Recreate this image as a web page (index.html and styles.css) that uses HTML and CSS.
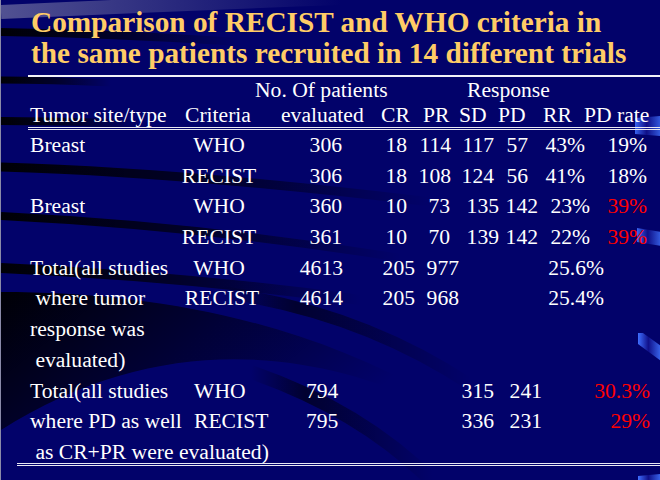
FILE: index.html
```html
<!DOCTYPE html>
<html>
<head>
<meta charset="utf-8">
<link rel="stylesheet" href="styles.css">
</head>
<body>
<div class="slide">
  <svg class="bg" width="660" height="480" viewBox="0 0 660 480" aria-hidden="true">
    <defs>
      <linearGradient id="fadeDark" x1="0" y1="0" x2="1" y2="0">
        <stop offset="0" stop-color="#000" stop-opacity="0.95"/>
        <stop offset="0.5" stop-color="#000" stop-opacity="0.6"/>
        <stop offset="1" stop-color="#000" stop-opacity="0"/>
      </linearGradient>
      <linearGradient id="fadeLight" x1="0" y1="0" x2="1" y2="0">
        <stop offset="0" stop-color="#5a5a96" stop-opacity="0.9"/>
        <stop offset="1" stop-color="#5a5a96" stop-opacity="0"/>
      </linearGradient>
      <linearGradient id="bigDark" x1="0" y1="0" x2="1" y2="0.4">
        <stop offset="0" stop-color="#000" stop-opacity="0.95"/>
        <stop offset="0.6" stop-color="#000" stop-opacity="0.4"/>
        <stop offset="1" stop-color="#000" stop-opacity="0"/>
      </linearGradient>
      <linearGradient id="midDark" x1="0" y1="0" x2="1" y2="0">
        <stop offset="0" stop-color="#000" stop-opacity="0"/>
        <stop offset="0.3" stop-color="#000" stop-opacity="0.55"/>
        <stop offset="1" stop-color="#000" stop-opacity="0"/>
      </linearGradient>
      <linearGradient id="ribbon" x1="0" y1="0" x2="1" y2="0">
        <stop offset="0" stop-color="#3f6fff"/>
        <stop offset="0.45" stop-color="#10108a"/>
        <stop offset="1" stop-color="#3a68f0"/>
      </linearGradient>
    </defs>
    <path d="M0 12 Q170 4 340 -2" stroke="url(#fadeLight)" stroke-width="14" fill="none"/>
    <path d="M0 32 Q120 34 240 42" stroke="url(#fadeDark)" stroke-width="8" fill="none"/>
    <path d="M0 80 Q50 80 110 83" stroke="url(#fadeDark)" stroke-width="7" fill="none"/>
    <path d="M0 121 Q70 121 140 124" stroke="url(#fadeDark)" stroke-width="8" fill="none"/>
    <path d="M0 167 Q180 172 430 202" stroke="url(#fadeDark)" stroke-width="9" fill="none"/>
    <path d="M0 216 Q200 226 400 258" stroke="url(#fadeDark)" stroke-width="8" fill="none"/>
    <path d="M0 268 Q180 276 360 300" stroke="url(#fadeDark)" stroke-width="10" fill="none"/>
    <path d="M0 292 C150 292 300 320 430 395 L430 405 C300 345 150 335 0 430 Z" fill="url(#bigDark)"/>
    <path d="M220 292 Q360 312 470 385" stroke="url(#midDark)" stroke-width="12" fill="none"/>
    <path d="M250 372 Q360 410 432 482" stroke="url(#midDark)" stroke-width="14" fill="none"/>
    <polygon points="634,118 660,116 660,136 634,134" fill="url(#ribbon)" opacity="0.9"/>
    <polygon points="636,228 660,232 660,246 636,242" fill="url(#ribbon)" opacity="0.9"/>
    <polygon points="637,333 642,333 660,346 660,361 637,344" fill="url(#ribbon)"/>
    <polygon points="637,476 660,474 660,480 637,480" fill="url(#ribbon)"/>
  </svg>

  <div class="title"><div class="tline">Comparison of RECIST and WHO criteria in</div><div class="tline">the same patients recruited in 14 different trials</div></div>
  <div class="rule-title"></div>

  <div class="head1"><span>No. Of patients</span><span>Response</span></div>
  <div class="head2">
    <span>Tumor site/type</span><span>Criteria</span><span>evaluated</span><span>CR</span><span>PR</span><span>SD</span><span>PD</span><span>RR</span><span>PD rate</span>
  </div>
  <div class="rule-double rule-head"></div>

  <div class="rows">
    <div class="row grp-a">
      <span class="l">Breast</span><span class="c">WHO</span><span class="r">306</span><span class="r">18</span><span class="r">114</span><span class="r">117</span><span class="r">57</span><span class="r">43%</span><span class="r">19%</span>
    </div>
    <div class="row grp-a">
      <span class="l"></span><span class="c">RECIST</span><span class="r">306</span><span class="r">18</span><span class="r">108</span><span class="r">124</span><span class="r">56</span><span class="r">41%</span><span class="r">18%</span>
    </div>
    <div class="row grp-b">
      <span class="l">Breast</span><span class="c">WHO</span><span class="r">360</span><span class="r">10</span><span class="r">73</span><span class="r">135</span><span class="r">142</span><span class="r">23%</span><span class="r red">39%</span>
    </div>
    <div class="row grp-b">
      <span class="l"></span><span class="c">RECIST</span><span class="r">361</span><span class="r">10</span><span class="r">70</span><span class="r">139</span><span class="r">142</span><span class="r">22%</span><span class="r red">39%</span>
    </div>
    <div class="row grp-c">
      <span class="l">Total(all studies</span><span class="c">WHO</span><span class="r">4613</span><span class="r">205</span><span class="r">977</span><span class="r">25.6%</span>
    </div>
    <div class="row grp-c">
      <span class="l">&nbsp;where tumor</span><span class="c c-shift">RECIST</span><span class="r">4614</span><span class="r">205</span><span class="r">968</span><span class="r">25.4%</span>
    </div>
    <div class="row"><span class="l">response was</span></div>
    <div class="row"><span class="l">&nbsp;evaluated)</span></div>
    <div class="row grp-d">
      <span class="l">Total(all studies</span><span class="l">WHO</span><span class="l">794</span><span class="r">315</span><span class="r">241</span><span class="r red">30.3%</span>
    </div>
    <div class="row grp-d">
      <span class="l">where PD as well</span><span class="l">RECIST</span><span class="l">795</span><span class="r">336</span><span class="r">231</span><span class="r red">29%</span>
    </div>
    <div class="row"><span class="l">&nbsp;as CR+PR were evaluated)</span></div>
  </div>
  <div class="rule-double rule-bottom"></div>
</div>
</body>
</html>
```

FILE: styles.css
```css
html, body {
  margin: 0;
  padding: 0;
  background: #02026a;
}

.slide {
  position: relative;
  width: 660px;
  height: 480px;
  overflow: hidden;
  background: #02026a;
  border-left: 1px solid #8a8aa8;
  box-sizing: border-box;
  font-family: "Liberation Serif", "Times New Roman", serif;
  font-size: 21.6px;
  color: #ffffff;
}

.bg {
  position: absolute;
  left: 0;
  top: 0;
  z-index: 0;
}

.title,
.rule-title,
.head1,
.head2,
.rule-double,
.rows {
  position: relative;
  z-index: 1;
}

.title {
  padding: 7px 0 0 30px;
  font-family: "Liberation Serif", "Times New Roman", serif;
  font-weight: 700;
  font-size: 29.3px;
  line-height: 31px;
  color: #ffcc66;
  white-space: nowrap;
}

.rule-title {
  margin: 6px 0 0 27px;
  height: 2px;
  background: #f2f2f8;
}

.head1 {
  display: grid;
  grid-template-columns: 212px auto;
  padding-left: 254px;
  height: 26px;
  line-height: 26px;
  white-space: nowrap;
}

.head2 {
  display: grid;
  grid-template-columns: 155px 96px 100px 42px 36px 39px 45px 41px auto;
  padding-left: 29px;
  height: 24px;
  line-height: 24px;
  white-space: nowrap;
}

.rule-double {
  height: 0;
  border-top: 3px double #e8e8f2;
}

.rule-head {
  margin-left: 27px;
}

.rule-bottom {
  margin-top: -5px;
  margin-left: 16px;
}

.row {
  display: grid;
  grid-template-columns: 400px;
  padding-left: 29px;
  height: 30.7px;
  line-height: 30.7px;
  white-space: nowrap;
}

.grp-a {
  grid-template-columns: 148px 82px 82px 65px 44px 43px 34px 57px 62px;
}

.grp-b {
  grid-template-columns: 148px 82px 82px 65px 43px 49px 39px 52px 57px;
}

.grp-c {
  grid-template-columns: 148px 82px 83px 72px 44px 145px;
}

.grp-d {
  grid-template-columns: 164px 112px 114px 74px 48px 108px;
}

.l { text-align: left; }
.c { text-align: center; }
.r { text-align: right; }
.c-shift { padding-left: 6px; }

.red { color: #ff0000; }
```
